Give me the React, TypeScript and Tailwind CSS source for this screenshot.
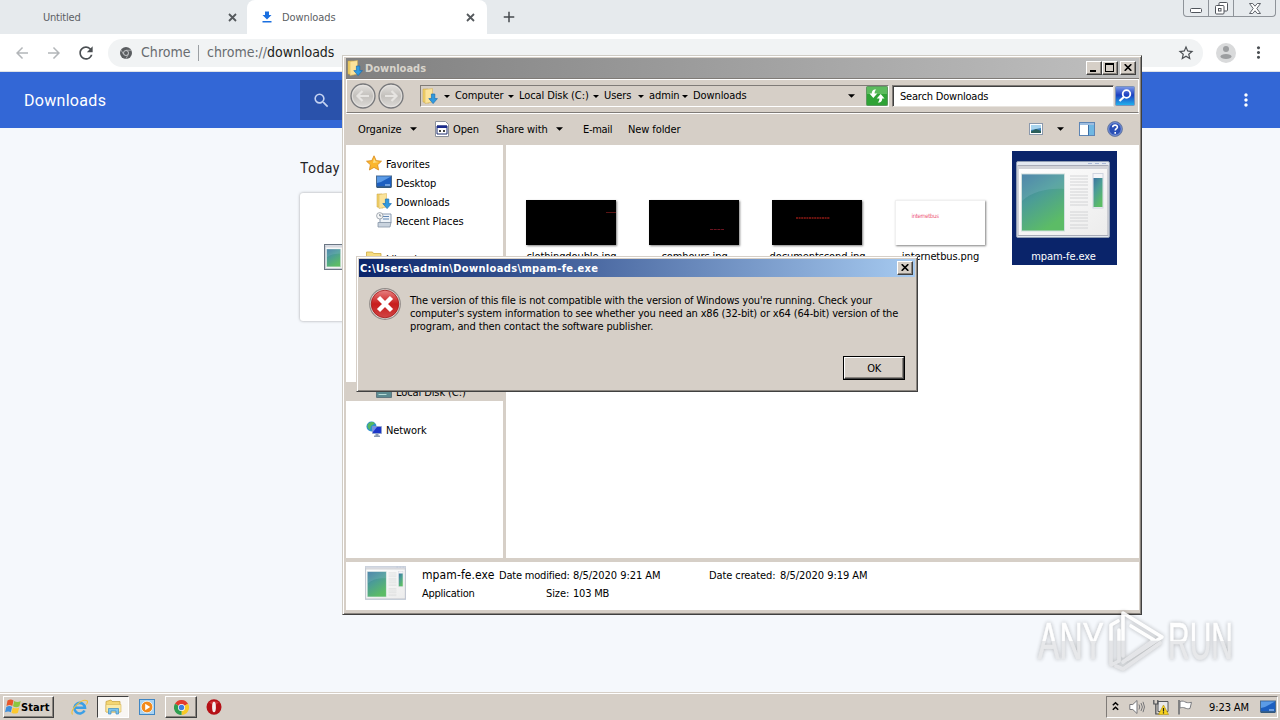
import type { ReactNode } from "react";
import { MdArrowBack, MdArrowForward, MdRefresh, MdSearch, MdStarBorder, MdMoreVert, MdAdd } from "react-icons/md";

const raised =
  "bg-[#d6cfc7] border border-t-white border-l-white border-r-[#404040] border-b-[#404040] shadow-[inset_-1px_-1px_0_#8a857f]";
const sunken = "border border-t-[#7f7b77] border-l-[#7f7b77] border-r-white border-b-white";

/* ---------- icons ---------- */

function TabClose() {
  return (
    <svg className="ml-0.5 size-[9px]" viewBox="0 0 9 9">
      <path d="m1 1 7 7M8 1 1 8" stroke="#55595d" strokeWidth="1.800" />
    </svg>
  );
}

function ChromeGray() {
  return (
    <svg className="size-3 shrink-0" viewBox="0 0 24 24">
      <circle cx="12" cy="12" r="12" fill="#5a5d60" />
      <circle cx="12" cy="12" r="5" fill="none" stroke="#d4d6d8" strokeWidth="1.8" />
      <path d="M12 6.500h10.600M7.200 14.800 2 6M16.800 14.800 11.500 24" stroke="#c4c6c8" strokeWidth="1.400" />
    </svg>
  );
}

function ChromeColor() {
  return (
    <svg className="size-[15px]" viewBox="0 0 24 24">
      <path d="M12 12 1.6 6A12 12 0 0 1 22.4 6z" fill="#e33b2e" />
      <path d="M12 12 22.4 6A12 12 0 0 1 12 24z" fill="#f7c927" />
      <path d="M12 12v12A12 12 0 0 1 1.6 6z" fill="#2f9e4f" />
      <circle cx="12" cy="12" r="5.6" fill="#fff" />
      <circle cx="12" cy="12" r="4.4" fill="#3f7de0" />
    </svg>
  );
}

function DownloadsFolder({ className = "" }: { className?: string }) {
  return (
    <svg className={`shrink-0 ${className}`} viewBox="0 0 16 16">
      <path d="M1 1h5l1 1v13l-6-1z" fill="#f3d36b" stroke="#c59f3c" strokeWidth=".5" />
      <path d="M3 1.500 10.500.5V14L3 15.500z" fill="#fbe39a" stroke="#d1ae4f" strokeWidth=".5" />
      <path d="M9.400 6h3.400v4.600h2.600L11.100 15.600 6.800 10.600h2.600z" fill="#2f9ae0" stroke="#1b6fb3" strokeWidth=".7" />
    </svg>
  );
}

function AppIcon({ className = "" }: { className?: string }) {
  return (
    <svg className={`shrink-0 ${className}`} viewBox="0 0 94 77" preserveAspectRatio="none">
      <defs>
        <linearGradient id="appgreen" x1="0" y1="0" x2=".5" y2="1">
          <stop offset="0" stopColor="#3a73a0" />
          <stop offset=".45" stopColor="#4b9c97" />
          <stop offset="1" stopColor="#5cbc66" />
        </linearGradient>
        <linearGradient id="appface" x1="0" y1="0" x2="1" y2="1">
          <stop offset="0" stopColor="#fff" />
          <stop offset="1" stopColor="#ececec" />
        </linearGradient>
      </defs>
      <rect x=".5" y=".5" width="93" height="76" rx="1.5" fill="#e3e8f0" stroke="#8f9cb2" />
      <rect x="2" y="4.5" width="90" height="70" fill="url(#appface)" stroke="#a9acb8" />
      <path d="M2 5h90v3H2z" fill="#d2d3d8" />
      <path d="M72 2.5h4M79 2.5h4M86 2.5h4" stroke="#a8b7d6" />
      <rect x="5.5" y="13" width="43" height="57" fill="url(#appgreen)" stroke="#cfe0dd" />
      <path d="M6 40C16 31 31 27 48 28v-14.500H6z" fill="#8fc0cf" opacity=".25" />
      <path d="M54 15h18M54 18h18M54 21h18M54 24h18M54 28h18M54 31h18M54 34h18M54 37h18M54 41h18M54 44h18M54 51h18M54 54h18M54 57h18M54 60h18M54 64h18M54 67h18" stroke="#cfd0d2" strokeWidth=".9" />
      <rect x="77" y="12.500" width="10" height="34.500" fill="#f4f5f8" stroke="#cfd4df" />
      <rect x="77.500" y="17" width="9" height="29" fill="url(#appgreen)" />
    </svg>
  );
}

function Caret({ className = "" }: { className?: string }) {
  return (
    <svg className={`shrink-0 ${className}`} viewBox="0 0 8 4">
      <path d="M0 0h8L4 4z" fill="#000" />
    </svg>
  );
}

function MonitorIcon() {
  return (
    <svg className="h-3.5 w-4 shrink-0" viewBox="0 0 16 14">
      <rect x=".5" y="1" width="15" height="11" fill="#1d5fc0" stroke="#4a6b8e" />
      <path d="M1 1.500h14L5 7 1 8z" fill="#5b9be6" />
      <path d="M1 11.500h14v1.500H1z" fill="#33587c" />
      <path d="M9 10h5" stroke="#bfe0ff" />
    </svg>
  );
}

/* ---------- browser ---------- */

function Browser() {
  return (
    <div className="flex h-[692px] flex-col bg-[#f5f8fc] font-['DejaVu_Sans_Condensed','DejaVu_Sans',sans-serif]">
      <div className="flex h-[34px] shrink-0 items-start bg-[#e6eaed]">
        <div className="flex h-[34px] w-[247px] items-center pl-[43px] text-[11px] text-[#5c6064]">
          <span className="w-[183px] pt-0.5 tracking-[-0.2px]">Untitled</span>
          <TabClose />
        </div>
        <div className="flex h-[34px] w-60 items-center rounded-t-lg bg-white pl-[13px] text-[11px] text-[#5c6064]">
          <svg className="mr-2 size-[14px]" viewBox="0 0 14 14">
            <path d="M5 1.500h4v3.500h2.500L7 9.500 2.500 5H5zM2.500 11h9v1.500h-9z" fill="#1a6fe0" />
          </svg>
          <span className="w-[182px] pt-0.5 tracking-[-0.1px]">Downloads</span>
          <TabClose />
        </div>
        <MdAdd className="ml-[13px] mt-2 size-[18px] text-[#45494d]" />
        <div className="ml-auto mr-1 flex h-[17px] w-[93px] rounded-b-[4px] border border-t-0 border-[#8e9399]">
          <div className="flex w-[25px] items-end justify-center border-r border-[#8e9399] pb-[3px]">
            <svg className="h-[5px] w-3" viewBox="0 0 12 5">
              <rect x=".5" y=".5" width="11" height="4" rx="1" fill="#fff" stroke="#50555c" />
            </svg>
          </div>
          <div className="flex w-[25px] items-center justify-center border-r border-[#8e9399]">
            <svg className="size-[13px]" viewBox="0 0 13 13">
              <rect x="4" y=".5" width="8.500" height="8.500" rx="1" fill="#fff" stroke="#50555c" />
              <rect x=".5" y="3.500" width="8.500" height="8.500" rx="1" fill="#fff" stroke="#50555c" />
              <rect x="3.500" y="6.500" width="2.500" height="2.500" fill="#fff" stroke="#50555c" />
            </svg>
          </div>
          <div className="flex flex-1 items-center justify-center">
            <svg className="h-[11px] w-3" viewBox="0 0 12 11">
              <path d="M.5.5h3.200L6 3.200 8.300.5h3.200L7.800 5.500l3.700 5H8.300L6 7.800 3.700 10.500H.5l3.700-5z" fill="#fff" stroke="#50555c" strokeWidth=".9" />
            </svg>
          </div>
        </div>
      </div>

      <div className="flex h-[38px] shrink-0 items-center border-b border-[#dfe2e6] bg-white pl-[13px]">
        <MdArrowBack className="size-[18px] text-[#b3b6b9]" />
        <MdArrowForward className="ml-3.5 size-[18px] text-[#b3b6b9]" />
        <MdRefresh className="ml-[13px] size-5 text-[#4b4f53]" />
        <div className="ml-3 flex h-7 w-[1095px] items-center rounded-full bg-[#f1f3f4] pl-3 pr-2 text-[14px] text-[#686c70]">
          <ChromeGray />
          <span className="ml-[9px] w-[57px] tracking-[0.05px]">Chrome</span>
          <span className="mr-2 h-4 w-px bg-[#9b9fa3]" />
          <span className="tracking-[-0.02px]">
            chrome://<span className="text-[#1c1e20]">downloads</span>
          </span>
          <MdStarBorder className="ml-auto size-[18px] text-[#4b4f53]" />
        </div>
        <svg className="ml-[13px] size-5" viewBox="0 0 20 20">
          <circle cx="10" cy="10" r="10" fill="#d9dadb" />
          <circle cx="10" cy="6" r="3" fill="#9c9ea0" />
          <ellipse cx="10" cy="13.500" rx="5.500" ry="2.500" fill="#9c9ea0" />
        </svg>
        <MdMoreVert className="ml-[13px] size-[19px] text-[#4b4f53]" />
      </div>

      <div className="flex h-14 shrink-0 items-center bg-[#3367d6] font-[Roboto,sans-serif]">
        <span className="w-[276px] pl-6 pt-0.5 text-[16px] tracking-[0.3px] text-white">Downloads</span>
        <div className="ml-6 flex h-10 w-[680px] items-center bg-[#2a52ab] pl-3">
          <MdSearch className="size-[19px] text-[#c5d3f2]" />
        </div>
        <MdMoreVert className="ml-auto mr-6 size-5 text-white" />
      </div>

      <div className="pl-[300px] font-[Roboto,sans-serif]">
        <div className="flex h-[65px] items-center pt-[15px] text-[14px] tracking-[0.4px] text-[#1f2327]">Today</div>
        <div className="flex h-[128px] w-[680px] rounded-[3px] bg-white pl-6 pt-[51px] shadow-[0_0_3px_rgba(0,0,0,0.35)]">
          <AppIcon className="h-[26px] w-8 border border-[#6b7683]" />
        </div>
      </div>
    </div>
  );
}

/* ---------- explorer ---------- */

function CaptionButton({ children, className = "" }: { children: ReactNode; className?: string }) {
  return <div className={`flex h-[14px] w-4 items-center justify-center pb-px pr-px ${raised} ${className}`}>{children}</div>;
}

function CloseGlyph() {
  return (
    <svg className="h-[7px] w-2" viewBox="0 0 8 7">
      <path d="M.7.2 7.300 6.800M7.300.2.7 6.800" stroke="#000" strokeWidth="1.600" />
    </svg>
  );
}

function Crumb({ label, width }: { label: string; width: string }) {
  return (
    <div className={`flex items-center ${width}`}>
      <Caret className="mr-[5px] h-[3px] w-1.5" />
      <span className="whitespace-nowrap">{label}</span>
    </div>
  );
}

function NavArrow({ back = false }: { back?: boolean }) {
  return (
    <svg className="size-[26px]" viewBox="0 0 26 26">
      <defs>
        <linearGradient id="nav" x1="0" y1="0" x2="0" y2="1">
          <stop offset="0" stopColor="#e4e2df" />
          <stop offset=".5" stopColor="#c3c0bc" />
          <stop offset="1" stopColor="#dedcd9" />
        </linearGradient>
      </defs>
      <circle cx="13" cy="13" r="12" fill="url(#nav)" stroke="#77787b" strokeWidth="1.300" />
      <circle cx="13" cy="13" r="10.700" fill="none" stroke="#e8e6e3" strokeWidth=".8" />
      <path d={back ? "M19 13H8M12.500 8 7.500 13l5 5" : "M7 13h11M13.500 8l5 5-5 5"} fill="none" stroke="#e6e4e1" strokeWidth="2.200" />
    </svg>
  );
}

function TreeRow({ icon, label, nested = false, selected = false }: { icon: ReactNode; label: string; nested?: boolean; selected?: boolean }) {
  return (
    <div className={`flex h-[19px] items-center ${nested ? "pl-[30px]" : "pl-5"} ${selected ? "-mr-[3px] bg-[#d6cfc7]" : ""}`}>
      <div className="flex w-5 items-center pb-px">{icon}</div>
      <span className="pt-[3px]">{label}</span>
    </div>
  );
}

function FileTile({ name, children, selected = false }: { name: string; children: ReactNode; selected?: boolean }) {
  return (
    <div className={`flex h-[114px] w-[105px] flex-col items-center ${selected ? "bg-[#0a246a] text-white" : ""}`}>
      <div className="flex h-[94px] items-end justify-center pr-1">{children}</div>
      <span className="mt-[5px] pr-0.5 leading-[14px]">{name}</span>
    </div>
  );
}

function DarkThumb({ children }: { children: ReactNode }) {
  return (
    <svg className="h-[45px] w-[90px] shadow-[1px_1px_2px_rgba(0,0,0,0.5)]" viewBox="0 0 90 45">
      <rect width="90" height="45" fill="#000" />
      {children}
    </svg>
  );
}

function Explorer() {
  return (
    <div className="absolute left-[342px] top-[55px] flex h-[560px] w-[800px] flex-col border border-b-[#404040] border-l-[#d0ccc5] border-r-[#404040] border-t-[#d0ccc5] bg-[#d6cfc7] p-0.5 pl-[3px] text-[11px] tracking-[-0.1px] text-black shadow-[inset_1px_1px_0_#fff,inset_-1px_-1px_0_#8a857f]">
      <div className="flex h-5 shrink-0 items-center bg-[linear-gradient(90deg,#808080,#c0c0c0)] pl-px pr-[3px]">
        <DownloadsFolder className="size-4" />
        <span className="ml-0.5 flex-1 pt-0.5 font-bold tracking-[0px] text-[#d8d4cc]">Downloads</span>
        <CaptionButton>
          <svg className="h-[9px] w-2" viewBox="0 0 8 9">
            <path d="M0 7h6v2H0z" />
          </svg>
        </CaptionButton>
        <CaptionButton className="mr-0.5">
          <svg className="size-[9px]" viewBox="0 0 9 9">
            <path d="M0 0h9v9H0zM1 2v6h7V2z" fillRule="evenodd" />
          </svg>
        </CaptionButton>
        <CaptionButton>
          <CloseGlyph />
        </CaptionButton>
      </div>

      <div className="mt-px flex h-[34px] shrink-0 items-center border border-b-[#7f7b77] border-l-white border-r-white border-t-white pl-[3px] shadow-[0_1px_0_#fff,0_-1px_0_#7f7b77]">
        <NavArrow back />
        <div className="ml-0.5">
          <NavArrow />
        </div>
        <div className={`ml-4 flex h-[22px] w-[469px] items-center pl-px ${sunken}`}>
          <DownloadsFolder className="mr-1.5 size-4" />
          <Crumb label="Computer" width="w-16" />
          <Crumb label="Local Disk (C:)" width="w-[85px]" />
          <Crumb label="Users" width="w-[45px]" />
          <Crumb label="admin" width="w-[44px]" />
          <Crumb label="Downloads" width="w-[166px]" />
          <Caret className="h-1 w-[7px]" />
          <svg className="ml-auto h-5 w-[22px]" viewBox="0 0 22 20">
            <rect x=".5" y=".5" width="21" height="19" rx="1" fill="#2fa336" stroke="#5d9960" />
            <path d="M1 1h20v7H1z" fill="#7ccc78" opacity=".6" />
            <path d="M8.500 3.500C6.500 4 5.800 5.500 5.800 7.500H3.500L7.300 12l4-4.500H8.600c0-1.800.5-3 1.700-4zM13.500 16.500c2-.5 2.700-2 2.700-4h2.300L14.700 8l-4 4.500h2.700c0 1.800-.5 3-1.700 4z" fill="#fff" />
          </svg>
        </div>
        <div className="ml-[3px] flex h-[22px] w-[222px] items-center border border-b-[#e8e4df] border-l-[#7f7b77] border-r-[#e8e4df] border-t-[#7f7b77] bg-white pl-[7px] pt-0.5 tracking-[-0.2px] shadow-[inset_1px_1px_0_#404040]">
          Search Downloads
        </div>
        <svg className="ml-px size-5" viewBox="0 0 20 20">
          <defs>
            <linearGradient id="sb" x1="0" y1="0" x2="0" y2="1">
              <stop offset="0" stopColor="#7f9ce8" />
              <stop offset=".45" stopColor="#1c3fc0" />
              <stop offset="1" stopColor="#22b5ee" />
            </linearGradient>
          </defs>
          <rect x=".5" y=".5" width="19" height="19" rx="1" fill="url(#sb)" stroke="#7d93b8" />
          <circle cx="11.500" cy="8" r="3.800" fill="none" stroke="#fff" strokeWidth="1.800" />
          <path d="M8.800 11 4.500 15" stroke="#fff" strokeWidth="2.200" />
        </svg>
      </div>

      <div className="flex h-8 shrink-0 items-center pl-3 pr-4">
        <span className="w-[52px] pt-0.5">Organize</span>
        <Caret className="mr-[18px] h-1 w-[7px]" />
        <svg className="mr-1 h-4 w-3.5" viewBox="0 0 14 16">
          <path d="M.5.5h10l3 3v12H.5z" fill="#fff" stroke="#8a8f99" />
          <path d="M2 5h10v8H2z" fill="#fff" stroke="#1a2a6c" />
          <path d="M2 4.500h10v2.500H2z" fill="#1a2a8c" />
          <path d="M4 9h2v2H4zM8 9h2v2H8z" fill="#444" />
        </svg>
        <span className="w-[43px] pt-0.5">Open</span>
        <span className="w-[60px] pt-0.5">Share with</span>
        <Caret className="mr-5 h-1 w-[7px]" />
        <span className="w-[45px] pt-0.5 tracking-[-0.3px]">E-mail</span>
        <span className="pt-0.5">New folder</span>
        <svg className="ml-auto h-3 w-3.5" viewBox="0 0 14 12">
          <rect x=".5" y=".5" width="13" height="11" fill="#fff" stroke="#8b99ad" />
          <path d="M2 2h10v8H2z" fill="#3f7fb5" />
          <path d="M2 2h10v3L2 7z" fill="#a8d4ee" />
          <path d="M2 8.500 7 6l5 2v2H2z" fill="#2b5f5a" />
        </svg>
        <Caret className="ml-3.5 h-1 w-[7px]" />
        <svg className="ml-[15px] h-3.5 w-4" viewBox="0 0 16 14">
          <rect x=".5" y=".5" width="15" height="13" fill="#fff" stroke="#5d85b5" />
          <path d="M1 1h14v2H1z" fill="#9dbde0" />
          <path d="M10 3h5v10h-5z" fill="#6fb7e2" />
          <path d="M9.500 3v10.500" stroke="#3c6ea5" />
        </svg>
        <svg className="ml-3 size-4" viewBox="0 0 16 16">
          <circle cx="8" cy="8" r="7.400" fill="#2a4fb5" stroke="#71809f" />
          <circle cx="8" cy="8" r="6.300" fill="none" stroke="#a9bce8" strokeWidth=".7" />
          <path d="M5.700 6.300C5.800 3.300 10.600 3.400 10.400 6.200 10.300 7.700 8.200 7.800 8.200 9.600M8.200 11v1.700" fill="none" stroke="#fff" strokeWidth="1.600" />
        </svg>
      </div>

      <div className="flex h-[413px] shrink-0 bg-white">
        <div className="w-[160px] border-r-[3px] border-[#d6cfc7] pt-[9px]">
          <TreeRow
            label="Favorites"
            icon={
              <svg className="size-4" viewBox="0 0 16 16">
                <path d="m8 .8 2.200 4.800 5.300.6-3.900 3.600 1 5.200L8 12.400 3.400 15l1-5.200L.5 6.200l5.300-.6z" fill="#fbb62d" stroke="#d98a1c" strokeWidth=".8" />
                <path d="m8 3 1.500 3.400 3.500.5-6 1z" fill="#fde08a" />
              </svg>
            }
          />
          <TreeRow nested label="Desktop" icon={<MonitorIcon />} />
          <TreeRow nested label="Downloads" icon={<DownloadsFolder className="size-4" />} />
          <TreeRow
            nested
            label="Recent Places"
            icon={
              <svg className="size-4" viewBox="0 0 16 16">
                <path d="M4 2h11v9H4z" fill="#eef3f8" stroke="#8c9db3" />
                <path d="M7 4.500h6M7 7h6" stroke="#5f86b4" />
                <path d="M2 10.500h13l-1 4.500H2z" fill="#c9d3de" stroke="#8594a6" strokeWidth=".8" />
                <circle cx="3.800" cy="3.800" r="3.200" fill="#f6f7f8" stroke="#8e979f" strokeWidth=".8" />
                <path d="M3.800 2v2h1.500" fill="none" stroke="#50606e" strokeWidth=".7" />
              </svg>
            }
          />
          <div className="mt-[19px]">
            <TreeRow
              label="Libraries"
              icon={
                <svg className="size-4" viewBox="0 0 16 16">
                  <path d="M.5 2h6l1 1.500h7.500V14H.5z" fill="#f6dc80" stroke="#cfa944" strokeWidth=".8" />
                  <path d="M3 6h12v8H3z" fill="#8ec2e8" />
                </svg>
              }
            />
          </div>
          <div className="mt-[114px]">
            <TreeRow
              nested
              selected
              label="Local Disk (C:)"
              icon={
                <svg className="h-3.5 w-4" viewBox="0 0 16 14">
                  <path d="M2 3h12l1.500 5v5.500H.5V8z" fill="#b9c4c9" stroke="#5f7780" />
                  <path d="M1 8h14v5H1z" fill="#5b8a90" />
                  <path d="M2.500 10.500h8" stroke="#b6dbd6" />
                </svg>
              }
            />
          </div>
          <div className="mt-[19px]">
            <TreeRow
              label="Network"
              icon={
                <svg className="size-4" viewBox="0 0 16 16">
                  <circle cx="5.500" cy="5.500" r="5" fill="#2c8fd0" />
                  <path d="M2 3c3-3 6-2 7-.5L5 5l-1 4C1 7 1 5 2 3z" fill="#55b862" />
                  <path d="M6.500 5.500h9v7h-9z" fill="#1c35c8" stroke="#8fa3c9" strokeWidth=".8" />
                  <path d="M7 6h4l-4 5z" fill="#6f8cf0" />
                  <path d="M9.500 13h3v1.500h1.500V16H8v-1.500h1.500z" fill="#8b9bb3" />
                </svg>
              }
            />
          </div>
        </div>
        <div className="flex gap-[18px] pl-3.5 pt-1.5">
          <FileTile name="clothingdouble.jpg">
            <DarkThumb>
              <path d="M80 12.500h10" stroke="#5a1414" />
            </DarkThumb>
          </FileTile>
          <FileTile name="comhours.jpg">
            <DarkThumb>
              <path d="M61 29.500h14" stroke="#6b1420" strokeDasharray="3 .7" />
            </DarkThumb>
          </FileTile>
          <FileTile name="documentscond.jpg">
            <DarkThumb>
              <path d="M24 18h34" stroke="#8c1a14" strokeWidth="1.500" strokeDasharray="2 .6" />
            </DarkThumb>
          </FileTile>
          <FileTile name="internetbus.png">
            <div className="h-[45px] w-[90px] border-l border-t border-[#f0f0f0] bg-white pl-4 pt-2.5 text-[6px] leading-[9px] tracking-[-0.35px] text-[#ee5a7c] shadow-[1px_1px_2px_rgba(0,0,0,0.5)]">
              internetbus
            </div>
          </FileTile>
          <FileTile name="mpam-fe.exe" selected>
            <AppIcon className="mb-[7px] h-[77px] w-[94px]" />
          </FileTile>
        </div>
      </div>

      <div className="mt-1 flex h-12 shrink-0 bg-white pl-[19px] pt-1">
        <AppIcon className="h-[34px] w-[41px]" />
        <div className="ml-4 pt-px leading-[18px]">
          <div className="flex h-[18px]">
            <span className="-mt-px w-[77px] text-[12px] tracking-[0.1px]">mpam-fe.exe</span>
            <span className="w-[74px] tracking-[-0.2px]">Date modified:</span>
            <span className="w-[136px] tracking-[-0.05px]">8/5/2020 9:21 AM</span>
            <span className="w-[71px]">Date created:</span>
            <span className="tracking-[-0.05px]">8/5/2020 9:19 AM</span>
          </div>
          <div className="flex h-[18px]">
            <span className="w-[124px] tracking-[-0.25px]">Application</span>
            <span className="w-[27px]">Size:</span>
            <span className="tracking-[-0.2px]">103 MB</span>
          </div>
        </div>
      </div>
    </div>
  );
}

/* ---------- error dialog ---------- */

function ErrorDialog() {
  return (
    <div className="absolute left-[356px] top-[256px] flex h-[136px] w-[562px] flex-col border border-b-[#404040] border-l-[#d6cfc7] border-r-[#404040] border-t-[#d6cfc7] bg-[#d6cfc7] p-0.5 text-[11px] text-black shadow-[inset_1px_1px_0_#fff,inset_-1px_-1px_0_#8a857f]">
      <div className="flex h-[18px] shrink-0 items-center bg-[linear-gradient(90deg,#0a246a,#a6caf0)] pl-px pr-0.5">
        <span className="flex-1 pt-0.5 font-bold tracking-[0.35px] text-white">C:\Users\admin\Downloads\mpam-fe.exe</span>
        <CaptionButton>
          <CloseGlyph />
        </CaptionButton>
      </div>
      <div className="flex pl-2.5 pt-[11px]">
        <svg className="size-8 shrink-0" viewBox="0 0 32 32">
          <defs>
            <linearGradient id="err" x1="0" y1="0" x2="0" y2="1">
              <stop offset="0" stopColor="#e88080" />
              <stop offset=".5" stopColor="#c81c1c" />
              <stop offset="1" stopColor="#d04545" />
            </linearGradient>
          </defs>
          <circle cx="16" cy="16" r="15.300" fill="#e8e4e2" stroke="#918b88" strokeWidth="1.200" />
          <circle cx="16" cy="16" r="13.800" fill="url(#err)" stroke="#a01616" strokeWidth=".8" />
          <path d="m9.500 9.500 13 13M22.500 9.500l-13 13" stroke="#fff" strokeWidth="4.400" />
        </svg>
        <p className="ml-[9px] mt-1.5 whitespace-nowrap leading-[13px] tracking-[-0.175px]">
          The version of this file is not compatible with the version of Windows you're running. Check your
          <br />
          <span className="tracking-[-0.165px]">
            computer's system information to see whether you need an x86 (32-bit) or x64 (64-bit) version of the
          </span>
          <br />
          <span className="tracking-[-0.12px]">program, and then contact the software publisher.</span>
        </p>
      </div>
      <div className="mb-[9px] ml-auto mr-2.5 mt-auto border border-black">
        <button className={`flex h-[22px] w-[60px] items-center justify-center pt-0.5 tracking-[-0.4px] ${raised}`}>OK</button>
      </div>
    </div>
  );
}

/* ---------- watermark ---------- */

function Watermark() {
  return (
    <svg className="absolute left-[1030px] top-[600px] h-[84px] w-[230px] overflow-visible opacity-90 drop-shadow-[0_0_2px_rgba(0,0,0,0.3)]" viewBox="0 -4 230 84">
      <defs>
        <linearGradient id="wm" x1="0" y1="0" x2="0" y2="1">
          <stop offset=".49" stopColor="#fff" />
          <stop offset=".5" stopColor="#e6e7e9" />
        </linearGradient>
        <linearGradient id="wmp" gradientUnits="userSpaceOnUse" x1="0" y1="0" x2="0" y2="74">
          <stop offset=".49" stopColor="#fff" />
          <stop offset=".5" stopColor="#e3e4e6" />
        </linearGradient>
      </defs>
      <g fill="url(#wm)" stroke="url(#wm)" strokeWidth=".6" fontFamily="'Liberation Sans Narrow','Liberation Sans',sans-serif" fontSize="51">
        <text x="8" y="55" textLength="66" lengthAdjust="spacingAndGlyphs">ANY</text>
        <text x="138" y="55" textLength="65" lengthAdjust="spacingAndGlyphs">RUN</text>
      </g>
      <g fill="none" stroke="url(#wmp)" strokeWidth="3.600" strokeLinejoin="round" strokeLinecap="round">
        <path d="M93 52V9l39 24-34 22" />
        <path d="m101 22 23 14-31 22" />
        <path d="m88 17-7 4v40l8-4V26" />
        <path d="M130 39 93 65l-7-3" />
      </g>
    </svg>
  );
}

/* ---------- taskbar ---------- */

function Taskbar() {
  return (
    <div className="flex h-7 items-center border-t border-[#d6cfc7] bg-[#d6cfc7] pl-[3px] pr-0.5 pt-px text-[11px] text-black shadow-[inset_0_1px_0_#fff]">
      <div className={`flex h-[22px] w-[51px] items-center pl-px ${raised}`}>
        <svg className="size-4 shrink-0" viewBox="0 0 16 16">
          <path d="M2.500 1.500c2.400-1.200 4-1.200 6 0L7.300 7c-1.700-1.200-3.600-1.200-5.800 0z" fill="#e8572a" />
          <path d="M9.200 2c2.200 1.200 4.200 1.200 6.500 0l-1.300 5.300c-2.300 1.200-4.200 1.200-6.400 0z" fill="#8cc63f" />
          <path d="M1.300 8c2.200-1.200 4-1.200 5.800 0L5.800 13.300c-1.700-1.200-3.500-1.200-5.800 0z" fill="#3f8fdc" />
          <path d="M7.800 8.400c2.300 1.200 4.200 1.200 6.400 0l-1.300 5.300c-2.300 1.200-4.200 1.200-6.400 0z" fill="#fcc82f" />
        </svg>
        <span className="pt-0.5 font-bold tracking-[0.1px]">Start</span>
      </div>
      <svg className="ml-[17px] size-[17px]" viewBox="0 0 17 17">
        <path d="M13.500 11.500A5.300 5.300 0 1 1 14 8.800H4.500" fill="none" stroke="#3b9fe6" strokeWidth="2.600" />
        <path d="M1.500 15.500C-1.500 11 11-1 16 1.800c1 .8.200 2.500-.7 3.700" fill="none" stroke="#f1c13a" strokeWidth="1.100" />
      </svg>
      <div className="ml-[9px] flex h-[22px] w-8 items-center justify-center border border-b-white border-l-[#404040] border-r-white border-t-[#404040] bg-[#f8f6f3]">
        <svg className="h-4 w-[17px]" viewBox="0 0 17 16">
          <path d="M1 2.500 6 1l1 1.500h8V13H1z" fill="#f4d672" stroke="#caa443" strokeWidth=".8" />
          <path d="M1 5.500h15V13H1z" fill="#fbeaa6" stroke="#d7b654" strokeWidth=".6" />
          <path d="M3.500 15V9.500h10V15h-2.500v-3h-5v3z" fill="#7cc3ee" stroke="#3b8cc4" strokeWidth=".7" />
        </svg>
      </div>
      <svg className="ml-2.5 size-4" viewBox="0 0 16 16">
        <rect x=".5" y=".5" width="15" height="15" fill="#a9d3f2" stroke="#3f86c4" />
        <circle cx="8" cy="8" r="5.800" fill="#f28a1c" stroke="#fff" strokeWidth=".7" />
        <path d="m6.200 4.800 5 3.200-5 3.200z" fill="#fff" />
      </svg>
      <div className={`ml-2.5 flex h-[22px] w-8 items-center justify-center ${raised}`}>
        <ChromeColor />
      </div>
      <svg className="ml-[9px] size-4" viewBox="0 0 16 16">
        <ellipse cx="8" cy="8" rx="7.500" ry="7.700" fill="#b51016" />
        <path d="M3 3.500a7 5 0 0 1 10 0L8 7z" fill="#e0484b" opacity=".6" />
        <ellipse cx="8" cy="8" rx="1.900" ry="5.300" fill="#f4eeee" />
      </svg>

      <div className={`ml-auto flex h-[22px] w-[172px] items-center pl-[5px] ${sunken}`}>
        <svg className="mb-0.5 h-2.5 w-[7px]" viewBox="0 0 7 10">
          <path d="m.8 4.300 2.700-2.600 2.700 2.600M.8 8.800l2.700-2.600 2.700 2.600" fill="none" stroke="#000" strokeWidth="1.500" />
        </svg>
        <svg className="ml-2.5 size-4" viewBox="0 0 16 16">
          <path d="M.8 5.500h3L8 1.500v13l-4.200-4h-3z" fill="#fff" stroke="#77777a" />
          <path d="M10 5.500q1.500 2.500 0 5M12 4q2.800 4 0 8M14 2.800q3 5.200 0 10.400" fill="none" stroke="#77777a" strokeWidth="1" />
        </svg>
        <svg className="ml-2 size-4" viewBox="0 0 16 16">
          <path d="M5 2.500h10v10H5z" fill="#e9e9ea" stroke="#55585c" />
          <path d="M.8 1v4h4V1M2.800 5v10h4" fill="none" stroke="#4c4f53" strokeWidth="1.200" />
          <path d="m10.500 6 5 9.500h-10z" fill="#f7d21e" stroke="#b0900e" strokeWidth=".6" />
          <path d="M10.500 9v3.500M10.500 13.300v1.200" stroke="#222" strokeWidth="1.200" />
        </svg>
        <svg className="ml-2 size-4" viewBox="0 0 16 16">
          <path d="M2 1v14.500" stroke="#6d6e71" strokeWidth="1.600" />
          <path d="M3 2.500c3-1 4 0 6 .8 2 .6 3 .4 5.500 0L13 9.500c-2 .5-3 .3-5-.5-2-.7-3-.7-5 0z" fill="#fff" stroke="#7b7c80" />
        </svg>
        <span className="ml-4 whitespace-nowrap pt-0.5 tracking-[-0.1px]">9:23 AM</span>
        <div className="ml-auto mr-px">
          <MonitorIcon />
        </div>
      </div>
    </div>
  );
}

export default function App() {
  return (
    <div className="relative h-[720px] w-[1280px] overflow-hidden bg-[#f5f8fc] font-['DejaVu_Sans_Condensed','DejaVu_Sans',sans-serif]">
      <Browser />
      <Taskbar />
      <Explorer />
      <ErrorDialog />
      <Watermark />
    </div>
  );
}
